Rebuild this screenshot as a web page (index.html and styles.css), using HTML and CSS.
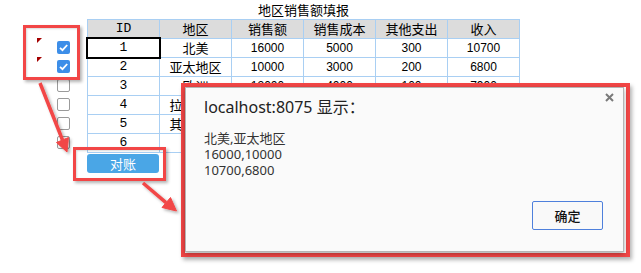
FILE: index.html
```html
<!DOCTYPE html>
<html lang="zh">
<head>
<meta charset="utf-8">
<link rel="stylesheet" href="styles.css">
</head>
<body>
<div class="page">
  <div class="form">
    <div class="side">
      <div class="side-head"></div>
      <div class="srow"><span class="mark"></span><span class="cb on"><svg viewBox="0 0 13 13" width="13" height="13"><path d="M3 6.8 L5.5 9.2 L10.2 4" fill="none" stroke="#fff" stroke-width="1.8"/></svg></span></div>
      <div class="srow"><span class="mark"></span><span class="cb on"><svg viewBox="0 0 13 13" width="13" height="13"><path d="M3 6.8 L5.5 9.2 L10.2 4" fill="none" stroke="#fff" stroke-width="1.8"/></svg></span></div>
      <div class="srow"><span class="mark blank"></span><span class="cb"></span></div>
      <div class="srow"><span class="mark blank"></span><span class="cb"></span></div>
      <div class="srow"><span class="mark blank"></span><span class="cb"></span></div>
      <div class="srow"><span class="mark blank"></span><span class="cb"></span></div>
    </div>
    <div class="main">
      <div class="title">地区销售额填报</div>
      <div class="grid">
        <div class="th id">ID</div><div class="th">地区</div><div class="th">销售额</div><div class="th">销售成本</div><div class="th">其他支出</div><div class="th">收入</div>
        <div class="td id sel">1</div><div class="td cn">北美</div><div class="td">16000</div><div class="td">5000</div><div class="td">300</div><div class="td">10700</div>
        <div class="td id">2</div><div class="td cn">亚太地区</div><div class="td">10000</div><div class="td">3000</div><div class="td">200</div><div class="td">6800</div>
        <div class="td id">3</div><div class="td cn">欧洲</div><div class="td">12000</div><div class="td">4000</div><div class="td">100</div><div class="td">7900</div>
        <div class="td id">4</div><div class="td cn">拉丁美洲</div><div class="td">8000</div><div class="td">2000</div><div class="td">100</div><div class="td">5900</div>
        <div class="td id">5</div><div class="td cn">其他地区</div><div class="td">6000</div><div class="td">1500</div><div class="td">100</div><div class="td">4400</div>
        <div class="td id">6</div><div class="td cn"></div><div class="td"></div><div class="td"></div><div class="td"></div><div class="td"></div>
      </div>
      <button class="btn-check">对账</button>
    </div>
  </div>

  <div class="note note-checks"></div>
  <div class="note note-btn"></div>
  <svg class="arrows" width="641" height="273" viewBox="0 0 641 273">
    <defs>
      <filter id="sh" x="-20%" y="-20%" width="140%" height="140%">
        <feDropShadow dx="2" dy="2" stdDeviation="1.5" flood-color="#000" flood-opacity="0.3"/>
      </filter>
    </defs>
    <g filter="url(#sh)" fill="#f24646" stroke="#f24646">
      <line x1="40" y1="83" x2="62.5" y2="140" stroke-width="3.5"/>
      <polygon points="67,152 68.5,137.5 56.5,142.5" stroke-width="1"/>
      <line x1="143" y1="183" x2="166" y2="202.6" stroke-width="3.5"/>
      <polygon points="176.5,211 170.5,197.5 162,207.5" stroke-width="1"/>
    </g>
  </svg>

  <div class="dialog-frame">
    <div class="dialog">
      <div class="dlg-head">
        <div class="dlg-title">localhost:8075 显示：</div>
        <svg class="close" width="9" height="9" viewBox="0 0 9 9"><path d="M1 1 L8 8 M8 1 L1 8" stroke="#7a7a7a" stroke-width="2"/></svg>
      </div>
      <div class="dlg-body">北美,亚太地区<br>16000,10000<br>10700,6800</div>
      <div class="dlg-foot"><button class="ok">确定</button></div>
    </div>
  </div>
</div>
</body>
</html>
```

FILE: styles.css
```css
html, body {
  margin: 0;
  padding: 0;
  background: #fff;
}
body {
  font-family: "Noto Sans CJK SC", "Noto Sans", sans-serif;
  color: #000;
}
.page {
  position: relative;
  width: 641px;
  height: 273px;
  overflow: hidden;
}
.form {
  display: flex;
}
.side {
  width: 87px;
  display: flex;
  flex-direction: column;
}
.side-head {
  height: 38px;
}
.srow {
  height: 19px;
  display: flex;
  align-items: flex-start;
  padding-left: 37px;
}
.mark {
  width: 0;
  height: 0;
  border-top: 5px solid #a40000;
  border-right: 5px solid transparent;
}
.mark.blank {
  border-top-color: transparent;
}
.cb {
  margin-left: 15px;
  margin-top: 3px;
  width: 13px;
  height: 13px;
  box-sizing: border-box;
  border: 1px solid #9a9a9a;
  border-radius: 2px;
  background: #fff;
  display: flex;
}
.cb.on {
  border: none;
  background: #3d8ee8;
}
.main {
  width: 433px;
  display: flex;
  flex-direction: column;
}
.title {
  height: 19px;
  line-height: 19px;
  text-align: center;
  font-size: 13px;
}
.grid {
  display: grid;
  grid-template-columns: repeat(6, 71px);
  grid-auto-rows: 18px;
  gap: 1px;
  padding: 1px;
  background: #a9cff3;
}
.th, .td {
  display: flex;
  align-items: center;
  justify-content: center;
  font-size: 12px;
  line-height: 18px;
}
.th {
  background: #dcdcdc;
  font-size: 13px;
}
.td {
  background: #fff;
  font-family: "Liberation Sans", "Noto Sans CJK SC", sans-serif;
}
.td.cn {
  font-family: "Noto Sans CJK SC", sans-serif;
  font-size: 13px;
}
.id {
  font-family: "Liberation Mono", "Noto Sans CJK SC", monospace;
  font-size: 13px;
}
.td.id {
  font-family: "Liberation Mono", monospace;
}
.sel {
  outline: 2px solid #000;
  position: relative;
}
.btn-check {
  margin-top: 1px;
  width: 72px;
  height: 19px;
  border: none;
  border-radius: 3px;
  background: #4aa6e6;
  color: #fff;
  font-family: "Noto Sans CJK SC", sans-serif;
  font-size: 13px;
  padding: 0;
  line-height: 19px;
}
.note {
  position: absolute;
  border: 3px solid #f24646;
  box-shadow: 2px 2px 3px rgba(0,0,0,0.3), inset 1px 1px 2px rgba(0,0,0,0.15);
}
.note-checks {
  left: 23px;
  top: 25px;
  width: 51px;
  height: 49px;
}
.note-btn {
  left: 73px;
  top: 147px;
  width: 87px;
  height: 28px;
}
.arrows {
  position: absolute;
  left: 0;
  top: 0;
}
.dialog-frame {
  position: absolute;
  left: 181px;
  top: 83px;
  width: 441px;
  height: 166px;
  border: 4px solid #f24646;
  box-shadow: 2px 3px 4px rgba(0,0,0,0.3);
}
.dialog {
  width: 439px;
  height: 165px;
  box-sizing: border-box;
  background: #fafafa;
  border: 1px solid #b5b5b5;
  box-shadow: 0 2px 5px rgba(0,0,0,0.35);
  display: flex;
  flex-direction: column;
  color: #333;
}
.dlg-head {
  display: flex;
  justify-content: space-between;
  align-items: flex-start;
  padding: 5px 9px 0 18px;
}
.dlg-title {
  margin-top: 4px;
  font-family: "Noto Sans", "Noto Sans CJK SC", sans-serif;
  font-size: 16px;
  line-height: 20px;
  color: #222;
}
.close {
  margin-top: 0;
}
.dlg-body {
  margin-top: 13px;
  padding-left: 18px;
  font-family: "Noto Sans", "Noto Sans CJK SC", sans-serif;
  font-size: 13px;
  line-height: 16px;
  color: #333;
}
.dlg-foot {
  margin-top: auto;
  display: flex;
  justify-content: flex-end;
  padding: 0 20px 21px 0;
}
.ok {
  width: 71px;
  height: 29px;
  box-sizing: border-box;
  border: 1px solid #4e80dc;
  border-radius: 2px;
  background: #f9f9f9;
  font-family: "Noto Sans CJK SC", sans-serif;
  font-size: 13px;
  font-weight: 500;
  color: #111;
  padding: 0;
}
```
